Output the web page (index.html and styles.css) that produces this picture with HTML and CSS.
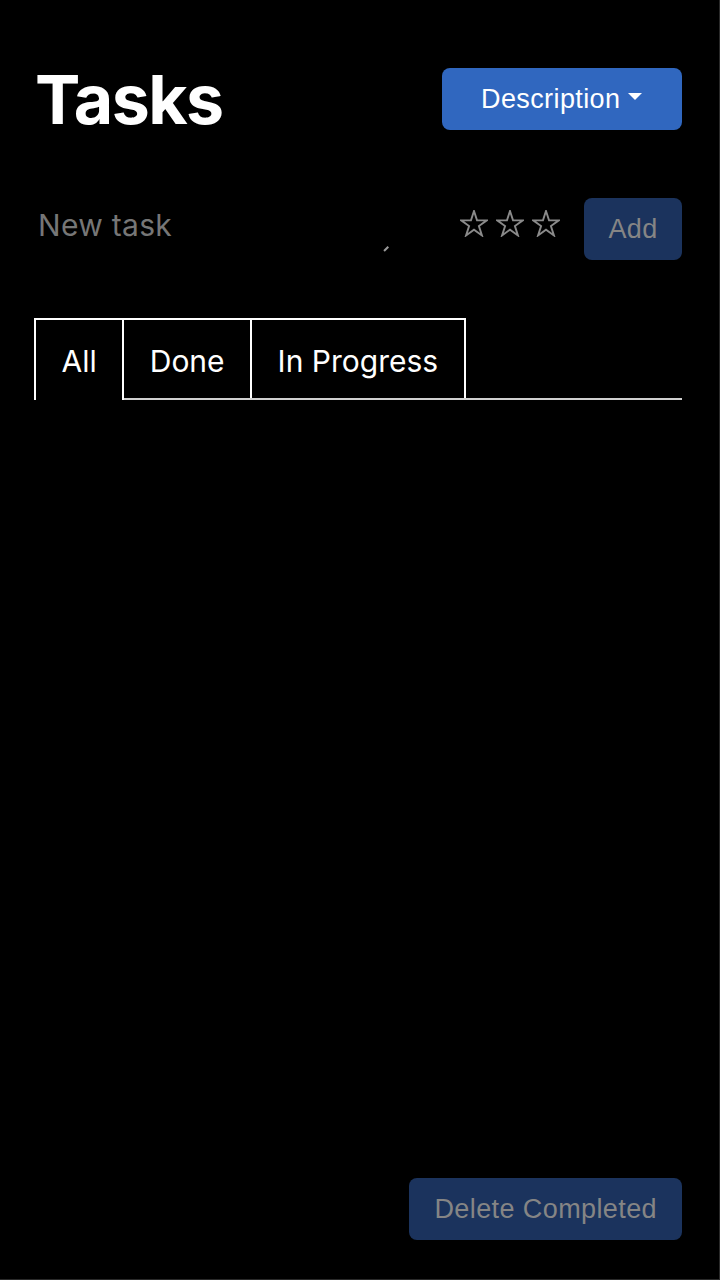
FILE: index.html
```html
<!DOCTYPE html>
<html lang="en">
<head>
<meta charset="utf-8">
<title>Tasks</title>
<link rel="stylesheet" href="styles.css">
</head>
<body>
<div class="page">
  <header class="header">
    <h1 class="title">Tasks</h1>
    <button class="btn btn-primary dropdown-toggle" type="button">Description</button>
  </header>

  <div class="new-task">
    <div class="task-input"><span class="placeholder">New task</span></div>
    <div class="stars">
      <svg class="star" viewBox="0 0 28 27" aria-hidden="true"><polygon points="14,1 17.03,10.33 26.84,10.33 18.91,16.09 21.94,25.42 14,19.66 6.06,25.42 9.09,16.09 1.16,10.33 10.97,10.33"/></svg>
      <svg class="star" viewBox="0 0 28 27" aria-hidden="true"><polygon points="14,1 17.03,10.33 26.84,10.33 18.91,16.09 21.94,25.42 14,19.66 6.06,25.42 9.09,16.09 1.16,10.33 10.97,10.33"/></svg>
      <svg class="star" viewBox="0 0 28 27" aria-hidden="true"><polygon points="14,1 17.03,10.33 26.84,10.33 18.91,16.09 21.94,25.42 14,19.66 6.06,25.42 9.09,16.09 1.16,10.33 10.97,10.33"/></svg>
    </div>
    <button class="btn btn-muted btn-add" type="button">Add</button>
  </div>

  <nav class="tabs">
    <div class="tab active">All</div>
    <div class="tab">Done</div>
    <div class="tab">In Progress</div>
  </nav>

  <div class="list"></div>

  <footer class="footer">
    <button class="btn btn-muted" type="button">Delete Completed</button>
  </footer>
</div>
</body>
</html>
```

FILE: styles.css
```css
html, body {
  margin: 0;
  padding: 0;
  background: #000;
}

.page {
  box-sizing: border-box;
  width: 720px;
  height: 1280px;
  padding: 58px 38px 40px 34px;
  display: flex;
  flex-direction: column;
  box-shadow: inset -1px -1px 0 #2a2a2a;
  font-family: Inter, "Noto Sans", sans-serif;
  color: #fff;
}

.header {
  display: flex;
  align-items: center;
  justify-content: space-between;
}

.title {
  margin: 0 0 0 1px;
  font-family: Inter, sans-serif;
  font-weight: 700;
  font-size: 68px;
  line-height: 82px;
  letter-spacing: -1.6px;
  color: #fff;
}

.btn {
  font-family: "Liberation Sans", Arial, sans-serif;
  font-size: 27px;
  letter-spacing: 0.4px;
  height: 62px;
  border: none;
  border-radius: 8px;
  padding: 0 25px;
  cursor: pointer;
  display: inline-flex;
  align-items: center;
}

.btn-primary {
  background: #3067bf;
  color: #fff;
  width: 240px;
  padding: 0 0 0 39px;
}

.dropdown-toggle::after {
  content: "";
  display: inline-block;
  margin-left: 8px;
  border-top: 7px solid #fff;
  border-left: 7px solid transparent;
  border-right: 7px solid transparent;
  position: relative;
  top: -3px;
}

.btn-muted {
  background: #1b335d;
  color: #858585;
}

.btn-add {
  width: 98px;
  justify-content: center;
  padding: 0;
}

.new-task {
  margin-top: 58px;
  display: flex;
  align-items: flex-start;
}

.task-input {
  position: relative;
  flex: 1;
  box-sizing: border-box;
  height: 54px;
  padding: 10px 0 0 4px;
  margin-right: 68px;
}

.task-input::after {
  content: "";
  position: absolute;
  right: 3px;
  bottom: 3px;
  width: 6px;
  height: 1.5px;
  background: #9a9a9a;
  transform: rotate(-45deg);
}

.placeholder {
  font-family: Inter, sans-serif;
  font-size: 30px;
  line-height: 35px;
  letter-spacing: 0.3px;
  color: #767676;
}

.stars {
  display: flex;
  gap: 8px;
  margin-top: 12px;
  margin-right: 24px;
}

.star {
  width: 28px;
  height: 27px;
  fill: none;
  stroke: #8a8a8a;
  stroke-width: 1.9;
  stroke-linejoin: miter;
}

.tabs {
  margin-top: 58px;
  display: flex;
  border-bottom: 2px solid #d0d0d0;
}

.tab {
  border: 2px solid #fff;
  border-bottom: none;
  padding: 23px 25.5px 19px;
  font-size: 30px;
  line-height: 36px;
  color: #fff;
  background: #000;
}

.tab + .tab {
  margin-left: -2px;
}

.tab.active {
  margin-bottom: -2px;
  padding-bottom: 21px;
  position: relative;
  z-index: 1;
}

.list {
  flex: 1;
}

.footer {
  display: flex;
  justify-content: flex-end;
}
```
